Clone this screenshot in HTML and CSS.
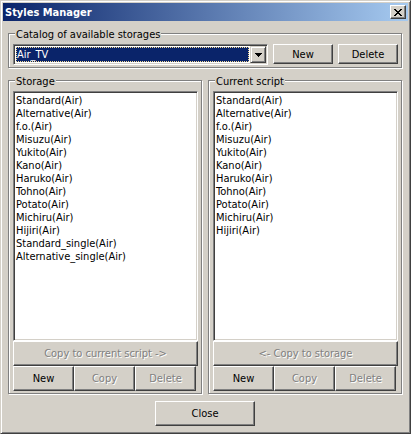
FILE: index.html
```html
<!DOCTYPE html>
<html lang="en">
<head>
<meta charset="utf-8">
<title>Styles Manager</title>
<link rel="stylesheet" href="styles.css">
</head>
<body>
<div class="window">
  <header class="titlebar">
    <h1 class="title">Styles Manager</h1>
    <button class="btn close-x" type="button" aria-label="Close window">
      <svg width="8" height="7" viewBox="0 0 8 7" shape-rendering="crispEdges" aria-hidden="true"><path d="M0 0h2v1h1v1h2v-1h1v-1h2v1h-1v1h-1v1h-1v1h1v1h1v1h1v1h-2v-1h-1v-1h-2v1h-1v1h-2v-1h1v-1h1v-1h1v-1h-1v-1h-1v-1h-1z"/></svg>
    </button>
  </header>
  <main class="content">
    <fieldset class="group catalog">
      <legend>Catalog of available storages</legend>
      <div class="combo">
        <select class="combo-select" aria-label="Catalog of available storages"><option>Air_TV</option></select>
        <span class="combo-arrow" aria-hidden="true"><svg width="7" height="4" viewBox="0 0 7 4" shape-rendering="crispEdges"><path d="M0 0h7v1h-1v1h-1v1h-1v1h-1v-1h-1v-1h-1v-1h-1z"/></svg></span>
      </div>
      <button class="btn" type="button">New</button>
      <button class="btn" type="button">Delete</button>
    </fieldset>
    <div class="panels">
      <fieldset class="group panel">
        <legend>Storage</legend>
        <select class="list" size="16" multiple aria-label="Storage">
          <option>Standard(Air)</option>
          <option>Alternative(Air)</option>
          <option>f.o.(Air)</option>
          <option>Misuzu(Air)</option>
          <option>Yukito(Air)</option>
          <option>Kano(Air)</option>
          <option>Haruko(Air)</option>
          <option>Tohno(Air)</option>
          <option>Potato(Air)</option>
          <option>Michiru(Air)</option>
          <option>Hijiri(Air)</option>
          <option>Standard_single(Air)</option>
          <option>Alternative_single(Air)</option>
        </select>
        <button class="btn tall" type="button" disabled>Copy to current script -&gt;</button>
        <div class="actions">
          <button class="btn tall" type="button">New</button>
          <button class="btn tall" type="button" disabled>Copy</button>
          <button class="btn tall" type="button" disabled>Delete</button>
        </div>
      </fieldset>
      <fieldset class="group panel">
        <legend>Current script</legend>
        <select class="list" size="16" multiple aria-label="Current script">
          <option>Standard(Air)</option>
          <option>Alternative(Air)</option>
          <option>f.o.(Air)</option>
          <option>Misuzu(Air)</option>
          <option>Yukito(Air)</option>
          <option>Kano(Air)</option>
          <option>Haruko(Air)</option>
          <option>Tohno(Air)</option>
          <option>Potato(Air)</option>
          <option>Michiru(Air)</option>
          <option>Hijiri(Air)</option>
        </select>
        <button class="btn tall" type="button" disabled>&lt;- Copy to storage</button>
        <div class="actions">
          <button class="btn tall" type="button">New</button>
          <button class="btn tall" type="button" disabled>Copy</button>
          <button class="btn tall" type="button" disabled>Delete</button>
        </div>
      </fieldset>
    </div>
    <button class="btn tall dismiss" type="button">Close</button>
  </main>
</div>
</body>
</html>
```
FILE: styles.css
```css
:root {
  --face: #d4d0c8;
  --shade: #808080;
  --dark: #404040;
  --navy: #0a246a;
}

* { box-sizing: border-box; }

body {
  margin: 0;
  background: var(--face);
}

body, button, select {
  font: 11px/13px Tahoma, "DejaVu Sans Condensed", "DejaVu Sans", sans-serif;
  color: #000;
}

.window {
  display: flex;
  flex-direction: column;
  min-height: 100vh;
  padding: 2px;
  border: 1px solid;
  border-color: var(--face) var(--dark) var(--dark) var(--face);
  box-shadow: inset 1px 1px 0 #fff, inset -1px -1px 0 var(--shade);
  background: var(--face);
}

.titlebar {
  display: flex;
  align-items: center;
  justify-content: space-between;
  height: 18px;
  padding: 0 2px;
  background: linear-gradient(to right, var(--navy), #a6caf0);
}

.title {
  margin: 0;
  font-size: 11px;
  font-weight: bold;
  color: #fff;
}

.btn {
  display: flex;
  align-items: center;
  justify-content: center;
  height: 20px;
  padding: 0;
  border: 1px solid;
  border-color: #fff var(--dark) var(--dark) #fff;
  border-radius: 0;
  box-shadow: inset -1px -1px 0 var(--shade);
  background: var(--face);
}

.btn:disabled {
  color: var(--shade);
  text-shadow: 1px 1px 0 #fff;
}

.tall { height: 25px; }

.close-x {
  width: 16px;
  height: 14px;
}

.content {
  display: flex;
  flex: 1;
  flex-direction: column;
  padding: 4px 6px 5px 5px;
}

.group {
  display: flex;
  min-width: 0;
  margin: 0;
  padding: 3px 3px 2px 4px;
  border: 1px solid var(--shade);
  box-shadow: 1px 1px 0 #fff, inset 1px 1px 0 #fff;
}

.group legend {
  margin-left: 2px;
  padding: 3px 1px 0;
  background: var(--face);
}

.catalog {
  gap: 5px;
}

.catalog .btn { width: 60px; }

.combo {
  display: grid;
  flex: 1;
  grid-template-columns: 1fr 16px;
  gap: 1px;
  height: 21px;
  padding: 1px;
  border: 1px solid;
  border-color: var(--shade) #fff #fff var(--shade);
  box-shadow: inset 1px 1px 0 var(--dark), inset -1px -1px 0 var(--face);
  background: #fff;
}

.combo-select {
  appearance: none;
  min-width: 0;
  margin: 1px 0 1px 1px;
  padding: 0 1px;
  border: 0;
  border-radius: 0;
  outline: 1px dotted #f5db95;
  outline-offset: -1px;
  background: var(--navy);
  color: #fff;
}

.combo-arrow {
  display: flex;
  align-items: center;
  justify-content: center;
  border: 1px solid;
  border-color: var(--face) var(--dark) var(--dark) var(--face);
  box-shadow: inset 1px 1px 0 #fff, inset -1px -1px 0 var(--shade);
  background: var(--face);
  pointer-events: none;
}

.panels {
  display: grid;
  flex: 1;
  grid-template-columns: 1fr 1fr;
  gap: 6px;
  margin-top: 4px;
}

.panel { flex-direction: column; }

.list {
  flex: 1;
  width: 100%;
  padding: 2px;
  border: 1px solid;
  border-color: var(--shade) #fff #fff var(--shade);
  border-radius: 0;
  outline: 0;
  box-shadow: inset 1px 1px 0 var(--dark), inset -1px -1px 0 var(--face);
  overflow: hidden;
  background: #fff;
}

.list option {
  min-height: 13px;
  padding: 0;
  line-height: 13px;
}

.actions {
  display: grid;
  grid-template-columns: repeat(3, 1fr);
  padding-right: 2px;
}

.dismiss {
  align-self: center;
  width: 100px;
  margin-top: 7px;
}
```
